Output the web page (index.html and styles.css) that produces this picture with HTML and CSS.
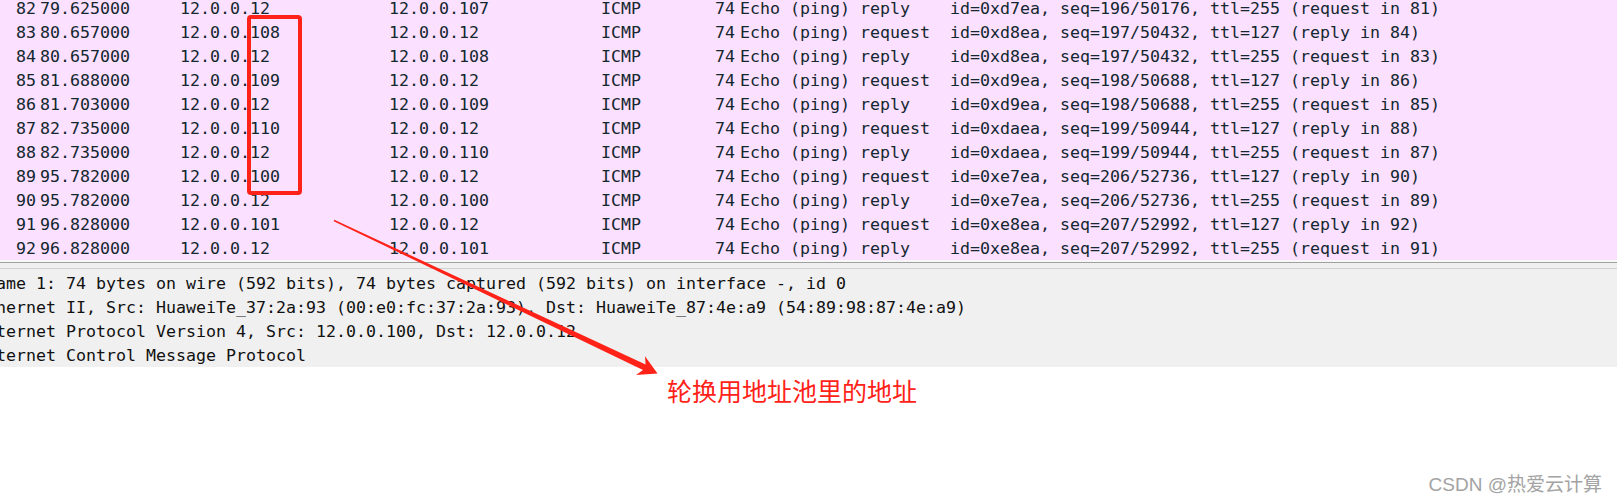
FILE: index.html
```html
<!DOCTYPE html>
<html lang="zh-CN">
<head>
<meta charset="utf-8">
<title>Wireshark ICMP capture</title>
<link rel="stylesheet" href="styles.css">
</head>
<body>
<div class="page">
  <div class="packet-list">
    <div class="row"><span class="no">82</span><span>79.625000</span><span>12.0.0.12</span><span>12.0.0.107</span><span>ICMP</span><span class="len">74</span><span class="info">Echo (ping) reply    id=0xd7ea, seq=196/50176, ttl=255 (request in 81)</span></div>
    <div class="row"><span class="no">83</span><span>80.657000</span><span>12.0.0.108</span><span>12.0.0.12</span><span>ICMP</span><span class="len">74</span><span class="info">Echo (ping) request  id=0xd8ea, seq=197/50432, ttl=127 (reply in 84)</span></div>
    <div class="row"><span class="no">84</span><span>80.657000</span><span>12.0.0.12</span><span>12.0.0.108</span><span>ICMP</span><span class="len">74</span><span class="info">Echo (ping) reply    id=0xd8ea, seq=197/50432, ttl=255 (request in 83)</span></div>
    <div class="row"><span class="no">85</span><span>81.688000</span><span>12.0.0.109</span><span>12.0.0.12</span><span>ICMP</span><span class="len">74</span><span class="info">Echo (ping) request  id=0xd9ea, seq=198/50688, ttl=127 (reply in 86)</span></div>
    <div class="row"><span class="no">86</span><span>81.703000</span><span>12.0.0.12</span><span>12.0.0.109</span><span>ICMP</span><span class="len">74</span><span class="info">Echo (ping) reply    id=0xd9ea, seq=198/50688, ttl=255 (request in 85)</span></div>
    <div class="row"><span class="no">87</span><span>82.735000</span><span>12.0.0.110</span><span>12.0.0.12</span><span>ICMP</span><span class="len">74</span><span class="info">Echo (ping) request  id=0xdaea, seq=199/50944, ttl=127 (reply in 88)</span></div>
    <div class="row"><span class="no">88</span><span>82.735000</span><span>12.0.0.12</span><span>12.0.0.110</span><span>ICMP</span><span class="len">74</span><span class="info">Echo (ping) reply    id=0xdaea, seq=199/50944, ttl=255 (request in 87)</span></div>
    <div class="row"><span class="no">89</span><span>95.782000</span><span>12.0.0.100</span><span>12.0.0.12</span><span>ICMP</span><span class="len">74</span><span class="info">Echo (ping) request  id=0xe7ea, seq=206/52736, ttl=127 (reply in 90)</span></div>
    <div class="row"><span class="no">90</span><span>95.782000</span><span>12.0.0.12</span><span>12.0.0.100</span><span>ICMP</span><span class="len">74</span><span class="info">Echo (ping) reply    id=0xe7ea, seq=206/52736, ttl=255 (request in 89)</span></div>
    <div class="row"><span class="no">91</span><span>96.828000</span><span>12.0.0.101</span><span>12.0.0.12</span><span>ICMP</span><span class="len">74</span><span class="info">Echo (ping) request  id=0xe8ea, seq=207/52992, ttl=127 (reply in 92)</span></div>
    <div class="row"><span class="no">92</span><span>96.828000</span><span>12.0.0.12</span><span>12.0.0.101</span><span>ICMP</span><span class="len">74</span><span class="info">Echo (ping) reply    id=0xe8ea, seq=207/52992, ttl=255 (request in 91)</span></div>
  </div>
  <div class="splitter"></div>
  <div class="details">
    <div class="line">Frame 1: 74 bytes on wire (592 bits), 74 bytes captured (592 bits) on interface -, id 0</div>
    <div class="line">Ethernet II, Src: HuaweiTe_37:2a:93 (00:e0:fc:37:2a:93), Dst: HuaweiTe_87:4e:a9 (54:89:98:87:4e:a9)</div>
    <div class="line">Internet Protocol Version 4, Src: 12.0.0.100, Dst: 12.0.0.12</div>
    <div class="line">Internet Control Message Protocol</div>
  </div>
  <div class="note">轮换用地址池里的地址</div>
  <div class="watermark">CSDN @热爱云计算</div>

  <div class="mark-box"></div>
  <svg class="arrow" width="1617" height="503" viewBox="0 0 1617 503" aria-hidden="true">
    <polygon points="334.3,219.8 645.6,364.6 645.0,356.2 657.5,373.5 636.0,375.0 643.0,370.0 333.7,221.2" fill="#ff2218"/>
  </svg>
</div>
</body>
</html>
```
FILE: styles.css
```css
html, body {
  margin: 0;
  padding: 0;
  background: #ffffff;
}

body {
  width: 1617px;
  height: 503px;
  overflow: hidden;
}

.page {
  position: relative;
  width: 1617px;
  height: 503px;
  overflow: hidden;
}

.packet-list {
  margin-top: -4px;
  background: #fce0ff;
  color: #12272e;
  font-family: "DejaVu Sans Mono", "Liberation Mono", monospace;
  font-size: 16.61px;
}

.row {
  display: grid;
  grid-template-columns: 40px 140px 209px 212px 114px 25px 1fr;
  grid-template-rows: 24px;
  height: 24px;
  line-height: 26px;
  white-space: pre;
}

.row .no {
  text-align: right;
  padding-right: 4px;
}

.row .len {
  text-align: right;
  padding-right: 5px;
}

.splitter {
  height: 6px;
  background: #f0f0f0;
  border-top: 2px solid #f7f7f7;
  border-bottom: 1px solid #d2d2d2;
  box-shadow: inset 0 1px 0 #a0a0a0;
}

.details {
  background: #f0f0f0;
  padding-top: 3px;
  height: 95px;
  color: #111111;
  font-family: "DejaVu Sans Mono", "Liberation Mono", monospace;
  font-size: 16.61px;
}

.details .line {
  height: 24px;
  line-height: 24px;
  margin-left: -24px;
  white-space: pre;
}

.note {
  margin-top: 11px;
  padding-left: 667px;
  height: 25px;
  line-height: 25px;
  font-family: "Noto Sans CJK SC", "Noto Sans", sans-serif;
  font-size: 25px;
  color: #ff2218;
}

.watermark {
  margin-top: 72px;
  display: flex;
  justify-content: flex-end;
  padding-right: 15px;
  height: 20px;
  line-height: 20px;
  font-family: "Liberation Sans", "Noto Sans CJK SC", sans-serif;
  font-size: 19px;
  color: #a3a3a3;
  text-shadow: 0 0 1px #ffffff;
}

.mark-box {
  position: absolute;
  left: 247px;
  top: 15px;
  width: 47px;
  height: 172px;
  border: 4px solid #ff2218;
  border-radius: 4px;
}

.arrow {
  position: absolute;
  left: 0;
  top: 0;
  pointer-events: none;
}
```
